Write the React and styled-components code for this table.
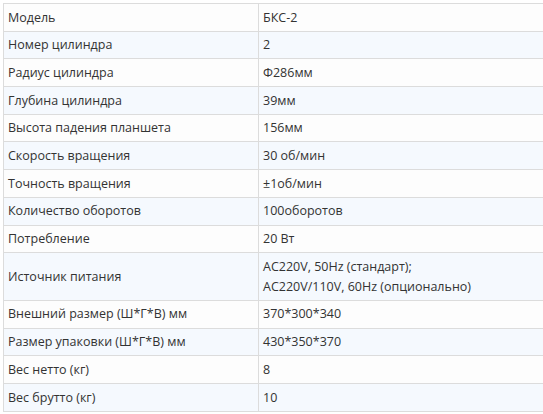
import React from 'react';
import styled, { createGlobalStyle } from 'styled-components';

const GlobalStyle = createGlobalStyle`
  html, body {
    margin: 0;
    padding: 0;
    background: #ffffff;
    overflow: hidden;
  }
`;

const Page = styled.div`
  padding: 3px 0 0 3px;
  font-family: "Open Sans", "Noto Sans", "Liberation Sans", sans-serif;
  font-size: 12.5px;
  color: #333333;
`;

const SpecTable = styled.table`
  border-collapse: collapse;
  width: 546px;
  table-layout: fixed;
`;

const Row = styled.tr`
  background: ${(p) => (p.$alt ? '#f5f9fe' : '#fdfdfd')};
`;

const Cell = styled.td`
  border: 1px solid #dcdcdc;
  padding: 3.6px 4px;
  line-height: 19.5px;
  vertical-align: middle;
  width: ${(p) => p.$w || 'auto'};
`;

const Line = styled.div`
  line-height: 19.75px;
`;

const specs = [
  ['Модель', 'БКС-2'],
  ['Номер цилиндра', '2'],
  ['Радиус цилиндра', 'Φ286мм'],
  ['Глубина цилиндра', '39мм'],
  ['Высота падения планшета', '156мм'],
  ['Скорость вращения', '30 об/мин'],
  ['Точность вращения', '±1об/мин'],
  ['Количество оборотов', '100оборотов'],
  ['Потребление', '20 Вт'],
  ['Источник питания', ['AC220V, 50Hz (стандарт);', 'AC220V/110V, 60Hz (опционально)']],
  ['Внешний размер (Ш*Г*В) мм', '370*300*340'],
  ['Размер упаковки (Ш*Г*В) мм', '430*350*370'],
  ['Вес нетто (кг)', '8'],
  ['Вес брутто (кг)', '10'],
];

export default function App() {
  return (
    <>
      <GlobalStyle />
      <Page>
        <SpecTable>
          <tbody>
            {specs.map(([label, value], i) => (
              <Row key={label} $alt={i % 2 === 1}>
                <Cell $w="246px">{label}</Cell>
                <Cell>
                  {Array.isArray(value)
                    ? value.map((v) => <Line key={v}>{v}</Line>)
                    : value}
                </Cell>
              </Row>
            ))}
          </tbody>
        </SpecTable>
      </Page>
    </>
  );
}
